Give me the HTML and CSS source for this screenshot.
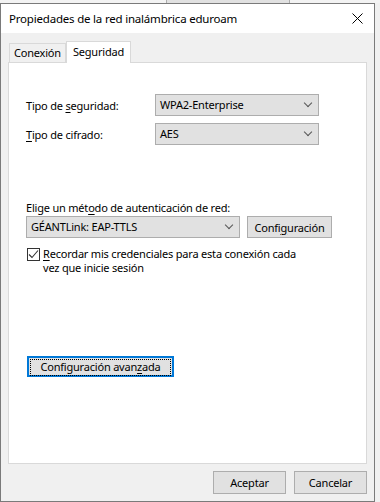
FILE: index.html
```html
<!DOCTYPE html>
<html>

<head>
    <meta charset="UTF-8">
    <title>Propiedades de la red inalámbrica eduroam</title>
    <link rel="stylesheet" href="styles.css">
</head>

<body>
    <div class="behind">
        <span class="behind-btn"></span>
    </div>
    <div class="window">
        <div class="titlebar">
            <span class="title">Propiedades de la red inalámbrica eduroam</span>
            <svg class="close" width="11" height="11" viewBox="0 0 11 11">
                <path d="M0.5 0.5 L10.5 10.5 M10.5 0.5 L0.5 10.5" stroke="#000" stroke-width="1" fill="none" />
            </svg>
        </div>
        <div class="client">
            <div class="tabs">
                <div class="tab">Conexión</div>
                <div class="tab active">Seguridad</div>
            </div>
            <div class="panel">
                <div class="row">
                    <span class="label">Tipo de <u>s</u>eguridad:</span>
                    <div class="select">WPA2-Enterprise<span class="arrow"></span></div>
                </div>
                <div class="row">
                    <span class="label"><u>T</u>ipo de cifrado:</span>
                    <div class="select">AES<span class="arrow"></span></div>
                </div>

                <div class="method-label">Elige un mét<u>o</u>do de autenticación de red:</div>
                <div class="method-row">
                    <div class="select wide">GÉANTLink: EAP-TTLS<span class="arrow"></span></div>
                    <button class="btn config">Confi<u>g</u>uración</button>
                </div>
                <div class="check-row">
                    <span class="checkbox">
                        <svg width="11" height="11" viewBox="0 0 11 11">
                            <path d="M1 5.5 L4 8.5 L10 1.5" stroke="#333" stroke-width="1.1" fill="none" />
                        </svg>
                    </span>
                    <span class="check-text"><u>R</u>ecordar mis credenciales para esta conexión cada<br>vez que inicie sesión</span>
                </div>

                <button class="btn advanced"><span class="focus">Configuración avan<u>z</u>ada</span></button>
            </div>
            <div class="footer">
                <button class="btn dlg">Aceptar</button>
                <button class="btn dlg">Cancelar</button>
            </div>
        </div>
    </div>
</body>

</html>
```

FILE: styles.css
```css
body {
    margin: 0;
    background-color: #f0f0f0;
    font-family: 'Noto Sans', sans-serif;
    font-size: 11px;
    letter-spacing: -0.2px;
    color: #000;
    width: 380px;
    height: 502px;
    overflow: hidden;
    position: relative;
}

u {
    text-decoration-thickness: 1px;
    text-underline-offset: 2px;
}

/* bits of the window lying behind */
.behind {
    position: absolute;
    top: 0;
    left: 0;
    width: 380px;
    height: 3px;
    background-color: #f3f3f3;
}

.behind-btn {
    position: absolute;
    left: 166px;
    top: -10px;
    width: 122px;
    height: 12px;
    background-color: #e1e1e1;
    border: 1px solid #adadad;
}

.window {
    position: absolute;
    top: 3px;
    left: 0;
    width: 373px;
    height: 497px;
    border: 1px solid #7a7a7a;
    background-color: #f0f0f0;
    display: flex;
    flex-direction: column;
}

.titlebar {
    height: 29px;
    background-color: #fff;
    display: flex;
    align-items: center;
    justify-content: space-between;
    padding: 0 11px 0 8px;
    flex-shrink: 0;
}

.title {
    font-size: 11.5px;
    letter-spacing: -0.2px;
}

.client {
    flex: 1;
    display: flex;
    flex-direction: column;
    padding: 8px 7px 0 7px;
}

.tabs {
    display: flex;
    align-items: flex-end;
    height: 21px;
    padding-left: 1px;
}

.tab {
    height: 18px;
    line-height: 18px;
    padding: 0 4px;
    border: 1px solid #d9d9d9;
    border-bottom: none;
    background-color: #f0f0f0;
}

.tab.active {
    height: 21px;
    line-height: 19px;
    background-color: #fff;
    padding: 0 6px;
    position: relative;
    top: 1px;
}

.panel {
    box-sizing: border-box;
    height: 402px;
    background-color: #fff;
    border: 1px solid #d9d9d9;
    padding: 31px 0 0 17px;
}

.row {
    display: flex;
    align-items: center;
    margin-bottom: 7px;
}

.label {
    width: 129px;
}

.select {
    position: relative;
    box-sizing: border-box;
    width: 164px;
    height: 22px;
    line-height: 20px;
    padding-left: 4px;
    background-color: #e1e1e1;
    border: 1px solid #adadad;
}

.arrow {
    position: absolute;
    right: 7px;
    top: 5px;
    width: 5px;
    height: 5px;
    border-right: 1px solid #555;
    border-bottom: 1px solid #555;
    transform: rotate(45deg);
}

.method-label {
    margin-top: 55px;
    height: 15px;
    line-height: 15px;
}

.method-row {
    display: flex;
    gap: 7px;
    margin-top: 1px;
}

.select.wide {
    width: 214px;
}

.btn {
    font-family: 'Noto Sans', sans-serif;
    font-size: 11px;
    letter-spacing: -0.2px;
    color: #000;
    background-color: #e1e1e1;
    border: 1px solid #adadad;
    box-sizing: border-box;
    height: 22px;
    padding: 0;
    margin: 0;
}

.btn.config {
    width: 85px;
}

.check-row {
    display: flex;
    align-items: flex-start;
    margin-top: 9px;
    padding-left: 1px;
}

.checkbox {
    box-sizing: border-box;
    width: 13px;
    height: 13px;
    border: 1px solid #333;
    display: flex;
    align-items: center;
    justify-content: center;
    margin-top: 1px;
    margin-right: 3px;
    flex-shrink: 0;
}

.check-text {
    line-height: 14px;
}

.advanced {
    display: block;
    margin-top: 81px;
    margin-left: 1px;
    width: 147px;
    height: 21px;
    border: 2px solid #0078d7;
    padding: 1px;
}

.advanced .focus {
    display: block;
    height: 15px;
    line-height: 14px;
    border: 1px dotted #000;
}

.footer {
    display: flex;
    justify-content: flex-end;
    gap: 8px;
    padding-top: 7px;
}

.btn.dlg {
    width: 73px;
    height: 23px;
}
```
